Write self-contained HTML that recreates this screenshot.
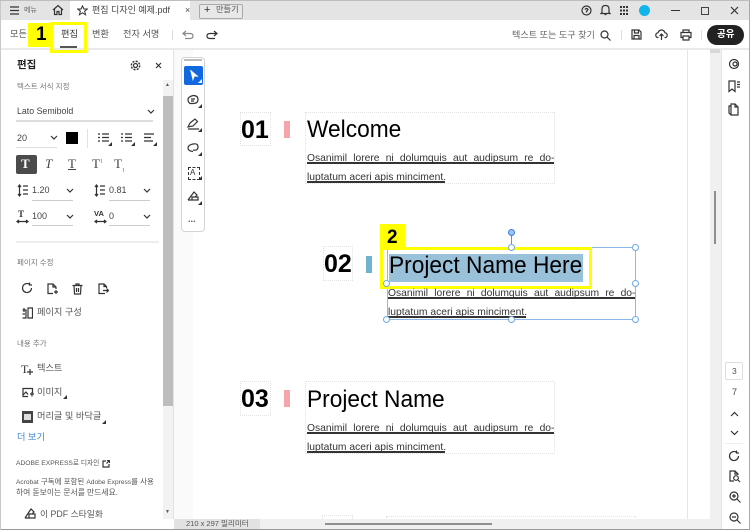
<!DOCTYPE html>
<html><head><meta charset="utf-8">
<style>
html,body{margin:0;padding:0;background:#fff}
#p{position:relative;width:750px;height:530px;overflow:hidden;background:#fff;font-family:"Liberation Sans","Noto Sans CJK KR",sans-serif;color:#444}
#p div,#p span.a,#p svg.a{position:absolute}
.t{white-space:nowrap;line-height:1}
.doc{font-family:"Liberation Sans","Noto Sans CJK KR",sans-serif}
.box{border:1px dotted #e2e2e2;box-sizing:border-box}
.num{font-weight:700;font-size:25px;color:#000;white-space:nowrap;line-height:1}
.ttl{font-size:24px;color:#000;white-space:nowrap;line-height:1;transform:scaleX(.947);transform-origin:left top}
.para{font-size:10.300px;color:#333;white-space:nowrap;line-height:1}
.ul{height:1.500px;background:#333}
svg{fill:none;stroke:#333;stroke-width:1.200}
.h{width:5px;height:5px;border:1px solid #6ea8e8;border-radius:50%;background:#fff}
.tr{width:4px;height:4px;background:#333;clip-path:polygon(100% 0,100% 100%,0 100%)}
</style></head><body>
<div id="p">
<!-- title bar -->
<div style="left:0;top:0;width:750px;height:20px;background:#e4e4e4"></div>
<div style="left:70px;top:1px;width:120px;height:19px;background:#fff"></div>
<svg class="a" style="left:10px;top:6px" width="10" height="9"><path d="M0 1H9M0 4.500H9M0 8H9"/></svg>
<div class="t" style="left:24px;top:7px;font-size:7px;color:#666">메뉴</div>
<svg class="a" style="left:52px;top:4px" width="12" height="12" viewBox="0 0 12 12"><path d="M1 6L6 1.500L11 6M2.500 5V10.500H5V7.500H7V10.500H9.500V5"/></svg>
<svg class="a" style="left:77px;top:5px" width="11" height="11"><path stroke-width="1" d="M5.500 .8L6.900 4H10.300L7.600 6.200L8.600 9.800L5.500 7.800L2.400 9.800L3.400 6.200L.7 4H4.100Z"/></svg>
<div class="t" style="left:92px;top:6px;font-size:9px;color:#444">편집 디자인 예제.pdf</div>
<div class="t" style="left:185px;top:6px;font-size:9px;color:#444">×</div>
<div style="left:199px;top:4px;width:42px;height:13px;border:1px solid #aaa;border-radius:2px;background:#e8e8e8"></div>
<div class="t" style="left:204px;top:5px;font-size:11px;color:#333">+</div>
<div class="t" style="left:216px;top:6px;font-size:8.200px;color:#555">만들기</div>
<svg class="a" style="left:581px;top:5px" width="11" height="11"><circle cx="5.500" cy="5.500" r="4.500"/><path d="M4 4.500Q5.500 2.500 7 4.500L5.500 6.500V7.500"/></svg>
<svg class="a" style="left:600px;top:4px" width="11" height="12"><path d="M2 8.500V5Q2 1.500 5.500 1.500T9 5V8.500L10 9.500H1ZM4.500 10.500H6.500"/></svg>
<svg class="a" style="left:620px;top:6px" width="9" height="9"><path stroke-width="2" stroke-dasharray="2 1" d="M0 1H9M0 4.500H9M0 8H9"/></svg>
<div style="left:639px;top:5px;width:11px;height:11px;border-radius:50%;background:#10b6ea"></div>
<div style="left:671px;top:10px;width:9px;height:1px;background:#333"></div>
<div style="left:701px;top:7px;width:6px;height:6px;border:1px solid #444"></div>
<svg class="a" style="left:730px;top:6px" width="9" height="9"><path d="M1 1L8 8M8 1L1 8"/></svg>
<!-- toolbar -->
<div style="left:0;top:48px;width:750px;height:2px;background:#eaeaea"></div>
<div class="t" style="left:10px;top:30px;font-size:9.200px;color:#555">모든</div>
<div style="left:28px;top:23px;width:25px;height:24px;background:#ffff00"></div>
<div class="t" style="left:36px;top:25px;font-size:19px;font-weight:700;color:#000">1</div>
<div style="left:50px;top:22px;width:37px;height:31px;border:3px solid #ffff00;box-sizing:border-box"></div>
<div class="t" style="left:61px;top:30px;font-size:9.200px;color:#333">편집</div>
<div style="left:60px;top:46px;width:17px;height:2px;background:#555"></div>
<div class="t" style="left:92px;top:30px;font-size:9.200px;color:#555">변환</div>
<div class="t" style="left:123px;top:30px;font-size:9.200px;color:#555">전자 서명</div>
<div style="left:172px;top:30px;width:1px;height:10px;background:#ddd"></div>
<svg class="a" style="left:182px;top:30px" width="12" height="10"><path stroke="#888" d="M4 1L1 3.500L4 6M1 3.500H8Q11 3.500 11 6T8 8.500H3"/></svg>
<svg class="a" style="left:206px;top:30px" width="12" height="10"><path d="M8 1L11 3.500L8 6M11 3.500H4Q1 3.500 1 6T4 8.500H9"/></svg>
<div class="t" style="left:512px;top:31px;font-size:9.100px;color:#666">텍스트 또는 도구 찾기</div>
<svg class="a" style="left:600px;top:30px" width="11" height="11"><circle cx="4.500" cy="4.500" r="3.500"/><path d="M7 7L10.500 10.500"/></svg>
<div style="left:621px;top:30px;width:1px;height:10px;background:#ddd"></div>
<svg class="a" style="left:631px;top:29px" width="11" height="11"><path d="M1 1H8L10 3V10H1ZM3.500 1V4H7.500V1M3 10V6.500H8V10"/></svg>
<svg class="a" style="left:655px;top:29px" width="13" height="12"><path d="M3.500 8.500H2.500Q.7 8 .8 6T3 3.800Q4 1 6.500 1T10 3.800Q12.200 4 12.200 6.300T10 8.500H9.500M6.500 11V5M4.500 7L6.500 5L8.500 7"/></svg>
<svg class="a" style="left:680px;top:29px" width="12" height="12"><path d="M3 3.500V1H9V3.500M3 8.500H1V3.500H11V8.500H9M3 7H9V11H3Z"/></svg>
<div style="left:701px;top:30px;width:1px;height:10px;background:#ddd"></div>
<div style="left:707px;top:25px;width:37px;height:20px;border-radius:10px;background:#222"></div>
<div class="t" style="left:717px;top:30px;font-size:9.500px;font-weight:700;color:#fff">공유</div>
<!-- left panel -->
<div style="left:173px;top:49px;width:1px;height:470px;background:#e2e2e2"></div>
<div style="left:174px;top:50px;width:19px;height:470px;background:#fafafa"></div>
<div class="t" style="left:17px;top:60px;font-size:10.500px;font-weight:700;color:#222">편집</div>
<svg class="a" style="left:130px;top:60px" width="11" height="11"><circle cx="5.500" cy="5.500" r="2"/><circle cx="5.500" cy="5.500" r="4.200" stroke-dasharray="2 1.300" stroke-width="1.500"/></svg>
<svg class="a" style="left:155px;top:62px" width="7" height="7"><path d="M1 1L6 6M6 1L1 6"/></svg>
<div style="left:163px;top:80px;width:10px;height:439px;background:#f2f2f2"></div>
<div style="left:163px;top:96px;width:10px;height:310px;background:#bdbdbd"></div>
<div class="t" style="left:165px;top:83px;font-size:5px;color:#555">▲</div>
<div class="t" style="left:165px;top:510px;font-size:5px;color:#555">▼</div>
<div class="t" style="left:17px;top:83px;font-size:7.500px;color:#777">텍스트 서식 지정</div>
<div class="t" style="left:17px;top:107px;font-size:8.800px;color:#444">Lato Semibold</div>
<svg class="a" style="left:147px;top:109px" width="8" height="6"><path d="M1 1L4 4L7 1"/></svg>
<div style="left:16px;top:120px;width:137px;height:1.500px;background:#ddd"></div>
<div class="t" style="left:17px;top:134px;font-size:9px;color:#444">20</div>
<svg class="a" style="left:50px;top:135px" width="8" height="6"><path d="M1 1L4 4L7 1"/></svg>
<div style="left:16px;top:147px;width:41px;height:1px;background:#ddd"></div>
<div style="left:66px;top:132px;width:12px;height:12px;background:#000"></div>
<div style="left:87px;top:129px;width:1px;height:19px;background:#e2e2e2"></div>
<svg class="a" style="left:98px;top:133px" width="13" height="12"><path d="M0 1H2M4 1H11M0 4.500H2M4 4.500H11M0 8H2M4 8H11"/></svg>
<svg class="a" style="left:121px;top:133px" width="13" height="12"><path d="M0 1H2M4 1H11M0 4.500H2M4 4.500H11M0 8H2M4 8H11"/></svg>
<svg class="a" style="left:144px;top:133px" width="13" height="12"><path d="M0 1H10M0 4.500H7M0 8H9"/></svg>
<div class="tr" style="left:108px;top:142px"></div>
<div class="tr" style="left:131px;top:142px"></div>
<div class="tr" style="left:153px;top:142px"></div>
<div style="left:16px;top:155px;width:21px;height:19px;border-radius:2px;background:#4b4b4b"></div>
<div class="t" style="left:21px;top:157px;font-size:13px;font-weight:700;color:#fff;font-family:'Liberation Serif',serif">T</div>
<div class="t" style="left:45px;top:157px;font-size:13px;font-style:italic;color:#444;font-family:'Liberation Serif',serif">T</div>
<div class="t" style="left:68px;top:157px;font-size:13px;color:#444;text-decoration:underline;font-family:'Liberation Serif',serif">T</div>
<div class="t" style="left:92px;top:157px;font-size:13px;color:#444;font-family:'Liberation Serif',serif">T<sup style="font-size:5px">1</sup></div>
<div class="t" style="left:114px;top:157px;font-size:13px;color:#444;font-family:'Liberation Serif',serif">T<sub style="font-size:5px">1</sub></div>
<svg class="a" style="left:17px;top:184px" width="11" height="13"><path d="M2.500 1V12M1 3L2.500 1L4 3M1 10L2.500 12L4 10M6 2H11M6 6H11M6 10H11"/></svg>
<div class="t" style="left:32px;top:186px;font-size:9px">1.20</div>
<svg class="a" style="left:66px;top:188px" width="8" height="6"><path d="M1 1L4 4L7 1"/></svg>
<div style="left:32px;top:200px;width:41px;height:1px;background:#ccc"></div>
<svg class="a" style="left:94px;top:184px" width="11" height="13"><path d="M2.500 1V12M1 3L2.500 1L4 3M1 10L2.500 12L4 10M6 2H11M6 6H11M6 10H11"/></svg>
<div class="t" style="left:109px;top:186px;font-size:9px">0.81</div>
<svg class="a" style="left:143px;top:188px" width="8" height="6"><path d="M1 1L4 4L7 1"/></svg>
<div style="left:109px;top:200px;width:41px;height:1px;background:#ccc"></div>
<div class="t" style="left:18px;top:210px;font-size:9px;font-weight:700;color:#333;font-family:'Liberation Serif',serif">T</div>
<svg class="a" style="left:16px;top:219px" width="13" height="5"><path d="M1 2.500H12M3 1L1 2.500L3 4M10 1L12 2.500L10 4"/></svg>
<div class="t" style="left:32px;top:212px;font-size:9px">100</div>
<svg class="a" style="left:66px;top:214px" width="8" height="6"><path d="M1 1L4 4L7 1"/></svg>
<div style="left:32px;top:225px;width:41px;height:1px;background:#ccc"></div>
<div class="t" style="left:94px;top:210px;font-size:7.500px;font-weight:700;color:#333">VA</div>
<svg class="a" style="left:94px;top:219px" width="13" height="5"><path d="M1 2.500H12M3 1L1 2.500L3 4M10 1L12 2.500L10 4"/></svg>
<div class="t" style="left:109px;top:212px;font-size:9px">0</div>
<svg class="a" style="left:143px;top:214px" width="8" height="6"><path d="M1 1L4 4L7 1"/></svg>
<div style="left:109px;top:225px;width:41px;height:1px;background:#ccc"></div>
<div style="left:16px;top:241px;width:143px;height:1.500px;background:#eee"></div>
<div class="t" style="left:17px;top:259px;font-size:7.500px;color:#777">페이지 수정</div>
<svg class="a" style="left:21px;top:282px" width="12" height="12"><path d="M10.500 6A4.500 4.500 0 1 1 8.500 2.300M8.500 0.500V3H11"/></svg>
<svg class="a" style="left:47px;top:283px" width="11" height="12"><path d="M6 10.500H1V1H6L9 4V6M6 1V4H9M7 9H11M9 7V11"/></svg>
<svg class="a" style="left:72px;top:283px" width="11" height="12"><path d="M0.500 2.500H10.500M4 2.500V1H7V2.500M2 2.500L2.500 11H8.500L9 2.500M4.500 5V9M6.500 5V9"/></svg>
<svg class="a" style="left:98px;top:283px" width="11" height="12"><path d="M7 10.500H1V1H6L8.500 3.500V5M6 1V3.500H8.500M5 7.500H10.500M8.500 5.500L10.500 7.500L8.500 9.500"/></svg>
<svg class="a" style="left:22px;top:307px" width="11" height="12"><path d="M0.500 3H4V11H0.500M6 1H10.500V11H6ZM2 1V5M0.500 7H3"/></svg>
<div class="t" style="left:37px;top:308px;font-size:9.200px;color:#555">페이지 구성</div>
<div class="t" style="left:17px;top:340px;font-size:7.500px;color:#777">내용 추가</div>
<div class="t" style="left:21px;top:363px;font-size:12px;color:#333;font-family:'Liberation Serif',serif">T</div>
<svg class="a" style="left:27px;top:369px" width="6" height="6"><path d="M3 0V6M0 3H6"/></svg>
<div class="t" style="left:37px;top:364px;font-size:9.200px;color:#555">텍스트</div>
<svg class="a" style="left:22px;top:387px" width="12" height="11"><path d="M6 9.500H1V1.500H10.500V6M1 8L4 5L6 7.500M8 7H12M10 5V9.500"/></svg>
<div class="t" style="left:37px;top:388px;font-size:9.200px;color:#555">이미지</div>
<div class="tr" style="left:63px;top:395px"></div>
<div style="left:22px;top:411px;width:11px;height:12px;background:#444"></div>
<div style="left:24px;top:414px;width:7px;height:6px;background:#ddd"></div>
<div class="t" style="left:37px;top:412px;font-size:9.200px;color:#555">머리글 및 바닥글</div>
<div class="tr" style="left:102px;top:420px"></div>
<div class="t" style="left:17px;top:433px;font-size:9.200px;color:#3a86d8">더 보기</div>
<div class="t" style="left:16px;top:461px;font-size:6.700px;color:#555">ADOBE EXPRESS로 디자인</div>
<svg class="a" style="left:102px;top:460px" width="8" height="8"><path d="M4 1H1V7H7V4M4.500 3.500L7.500 .5M5 .5H7.500V3"/></svg>
<div class="t" style="left:16px;top:478px;font-size:7.500px;color:#555"><span style="font-size:6.600px">Acrobat</span> 구독에 포함된 <span style="font-size:6.600px">Adobe Express</span>를 사용</div>
<div class="t" style="left:16px;top:489px;font-size:7.800px;color:#555">하여 돋보이는 문서를 만드세요.</div>
<svg class="a" style="left:24px;top:508px" width="12" height="12"><path d="M1 10L7 1L10 4L8 6M1 10H11V6H5V10"/></svg>
<div class="t" style="left:40px;top:510px;font-size:8.800px;color:#555">이 PDF 스타일화</div>
<!-- vertical tool bar -->
<div style="left:181px;top:57px;width:24px;height:175px;border:1.500px solid #d4d4d4;border-radius:4px;box-sizing:border-box;background:#fff"></div>
<div style="left:184px;top:59px;width:18px;height:2px;background:#bbb"></div>
<div style="left:184px;top:66px;width:19px;height:19px;border-radius:2px;background:#1169e0"></div>
<svg class="a" style="left:190px;top:70px" width="9" height="11"><path fill="#fff" stroke="#fff" d="M1 1L7 6H4L3 9Z"/></svg>
<svg class="a" style="left:187px;top:94px" width="14" height="13"><path d="M6 1.500Q11 1.500 11 5.500T6 9.500L3 9.500Q1 8 1 5.500T6 1.500M4 5H8M4 7H7"/></svg>
<svg class="a" style="left:187px;top:118px" width="14" height="13"><path d="M1 9L3 5L8 1L10.500 3.500L6 8ZM1 11H12"/></svg>
<svg class="a" style="left:187px;top:142px" width="14" height="12"><path d="M6 9.500Q1 9 1 6T6 2T11 5T6 8"/></svg>
<div style="left:188px;top:167px;width:10px;height:11px;border:1px dashed #333"></div>
<div class="t" style="left:190px;top:169px;font-size:8px;color:#333">A</div>
<svg class="a" style="left:187px;top:190px" width="14" height="13"><path d="M1 10L7 2L10 5L8 7M1 10H11V7H5V10"/></svg>
<div class="t" style="left:188px;top:215px;font-size:9px;font-weight:700;color:#555">...</div>
<!-- small triangles -->
<div class="tr" style="left:198px;top:79px;background:#fff"></div>
<div class="tr" style="left:198px;top:104px"></div>
<div class="tr" style="left:198px;top:128px"></div>
<div class="tr" style="left:198px;top:152px"></div>
<div class="tr" style="left:198px;top:176px"></div>
<div class="tr" style="left:198px;top:201px"></div>
<!-- doc block 1 -->
<div class="box" style="left:240px;top:112px;width:31px;height:34px"></div>
<div class="num doc" style="left:241px;top:118px">01</div>
<div style="left:284px;top:121px;width:6px;height:17px;background:#f4a6ab"></div>
<div class="box" style="left:305px;top:112px;width:250px;height:72px"></div>
<div class="ttl doc" style="left:307px;top:118px">Welcome</div>
<div class="para doc" style="left:307px;top:154px;word-spacing:3.300px">Osanimil lorere ni dolumquis aut audipsum re do-</div>
<div class="para doc" style="left:307px;top:173px">luptatum aceri apis minciment.</div>
<div class="ul" style="left:307px;top:162px;width:247px"></div>
<div class="ul" style="left:307px;top:181px;width:138px"></div>
<!-- doc block 2 -->
<div class="box" style="left:323px;top:246px;width:30px;height:35px"></div>
<div class="num doc" style="left:324px;top:252px">02</div>
<div style="left:366px;top:256px;width:6px;height:17px;background:#6fb3d2"></div>
<div style="left:389px;top:254px;width:194px;height:28px;background:#9ac1da"></div>
<div style="left:387px;top:247px;width:249px;height:73px;border:1px solid #8db8ea;box-sizing:border-box"></div>
<div style="left:511px;top:235px;width:1px;height:12px;background:#5a94e0"></div>
<div style="left:508px;top:229px;width:5px;height:5px;border-radius:50%;border:1px solid #3a80e0;background:#9cc4f0"></div>
<div style="left:380px;top:224px;width:25px;height:24px;background:#ffff00"></div>
<div style="left:380px;top:247px;width:212px;height:42px;border:3px solid #ffff00;box-sizing:border-box"></div>
<div class="t" style="left:387px;top:228px;font-size:19px;font-weight:700;color:#000">2</div>
<div class="ttl doc" style="left:389px;top:254px">Project Name Here</div>
<div class="para doc" style="left:388px;top:289px;word-spacing:3.300px">Osanimil lorere ni dolumquis aut audipsum re do-</div>
<div class="para doc" style="left:388px;top:308px">luptatum aceri apis minciment.</div>
<div class="ul" style="left:388px;top:297px;width:247px"></div>
<div class="ul" style="left:388px;top:316px;width:138px"></div>
<div class="h" style="left:383px;top:280px"></div>
<div class="h" style="left:632px;top:244px"></div>
<div class="h" style="left:632px;top:280px"></div>
<div class="h" style="left:383px;top:316px"></div>
<div class="h" style="left:508px;top:316px"></div>
<div class="h" style="left:632px;top:316px"></div>
<div class="h" style="left:508px;top:244px"></div>
<!-- doc block 3 -->
<div class="box" style="left:240px;top:381px;width:31px;height:35px"></div>
<div class="num doc" style="left:241px;top:387px">03</div>
<div style="left:284px;top:390px;width:6px;height:17px;background:#f4a6ab"></div>
<div class="box" style="left:305px;top:381px;width:250px;height:73px"></div>
<div class="ttl doc" style="left:307px;top:388px">Project Name</div>
<div class="para doc" style="left:307px;top:424px;word-spacing:3.300px">Osanimil lorere ni dolumquis aut audipsum re do-</div>
<div class="para doc" style="left:307px;top:443px">luptatum aceri apis minciment.</div>
<div class="ul" style="left:307px;top:432px;width:247px"></div>
<div class="ul" style="left:307px;top:451px;width:138px"></div>
<!-- block 4 peek -->
<div class="box" style="left:322px;top:515px;width:31px;height:10px"></div>
<div class="box" style="left:386px;top:516px;width:250px;height:10px"></div>
<!-- right area -->
<div style="left:687px;top:49px;width:1px;height:470px;background:#e6e6e6"></div>
<div style="left:710px;top:49px;width:11px;height:470px;background:#f0f0f0"></div>
<div style="left:721px;top:49px;width:1px;height:480px;background:#e4e4e4"></div>
<div style="left:710px;top:49px;width:10px;height:4px;background:#d8d8d8"></div>
<div style="left:714px;top:191px;width:2px;height:53px;background:#8f8f8f"></div>
<svg class="a" style="left:728px;top:58px" width="12" height="12"><circle cx="6" cy="6" r="4.500"/><circle cx="7" cy="6" r="2"/></svg>
<svg class="a" style="left:728px;top:80px" width="13" height="13"><path d="M1 1H7V11.500L4 9L1 11.500ZM9 2H12M9 4.500H12M9 7H12"/></svg>
<svg class="a" style="left:728px;top:103px" width="12" height="13"><path d="M3 3H1V10L3 12M3 1H7L10 4V12H3ZM7 1V4H10"/></svg>
<div style="left:725px;top:362px;width:18px;height:18px;border:1px solid #ddd;border-radius:2px;box-sizing:border-box"></div>
<div class="t" style="left:732px;top:367px;font-size:8.500px;color:#555">3</div>
<div class="t" style="left:732px;top:388px;font-size:9px;color:#444">7</div>
<svg class="a" style="left:730px;top:411px" width="9" height="6"><path d="M1 5L4.500 1.500L8 5"/></svg>
<svg class="a" style="left:730px;top:430px" width="9" height="6"><path d="M1 1L4.500 4.500L8 1"/></svg>
<div style="left:725px;top:443px;width:18px;height:1px;background:#eee"></div>
<svg class="a" style="left:728px;top:450px" width="12" height="12"><path d="M10.500 6A4.500 4.500 0 1 1 8.500 2.300M8.500 0.500V3H11"/></svg>
<svg class="a" style="left:729px;top:470px" width="13" height="14"><path d="M5 11H1V1H6L9 4V5M6 1V4H9"/><circle cx="7" cy="8" r="2.300"/><path d="M9 10L11 12"/></svg>
<svg class="a" style="left:729px;top:491px" width="12" height="12"><circle cx="5" cy="5" r="4"/><path d="M8 8L11.500 11.500M3 5H7M5 3V7"/></svg>
<svg class="a" style="left:729px;top:512px" width="12" height="12"><circle cx="5" cy="5" r="4"/><path d="M8 8L11.500 11.500M3 5H7"/></svg>
<!-- bottom bar -->
<div style="left:174px;top:519px;width:547px;height:10px;background:#f0f0f0"></div>
<div style="left:174px;top:519px;width:86px;height:10px;background:#e2e2e2"></div>
<div class="t" style="left:186px;top:520px;font-size:7.500px;color:#555">210 x 297 밀리미터</div>
<div style="left:325px;top:523px;width:167px;height:2px;background:#8f8f8f"></div>
<!-- window edges -->
<div style="left:0;top:529px;width:750px;height:1px;background:#9a9a9a"></div>
<div style="left:749px;top:0;width:1px;height:530px;background:#a8a8a8"></div>
<div style="left:0;top:0;width:1px;height:530px;background:#c8c8c8"></div>
<div style="left:0;top:0;width:750px;height:1px;background:#bdbdbd"></div>
</div>
</body></html>
